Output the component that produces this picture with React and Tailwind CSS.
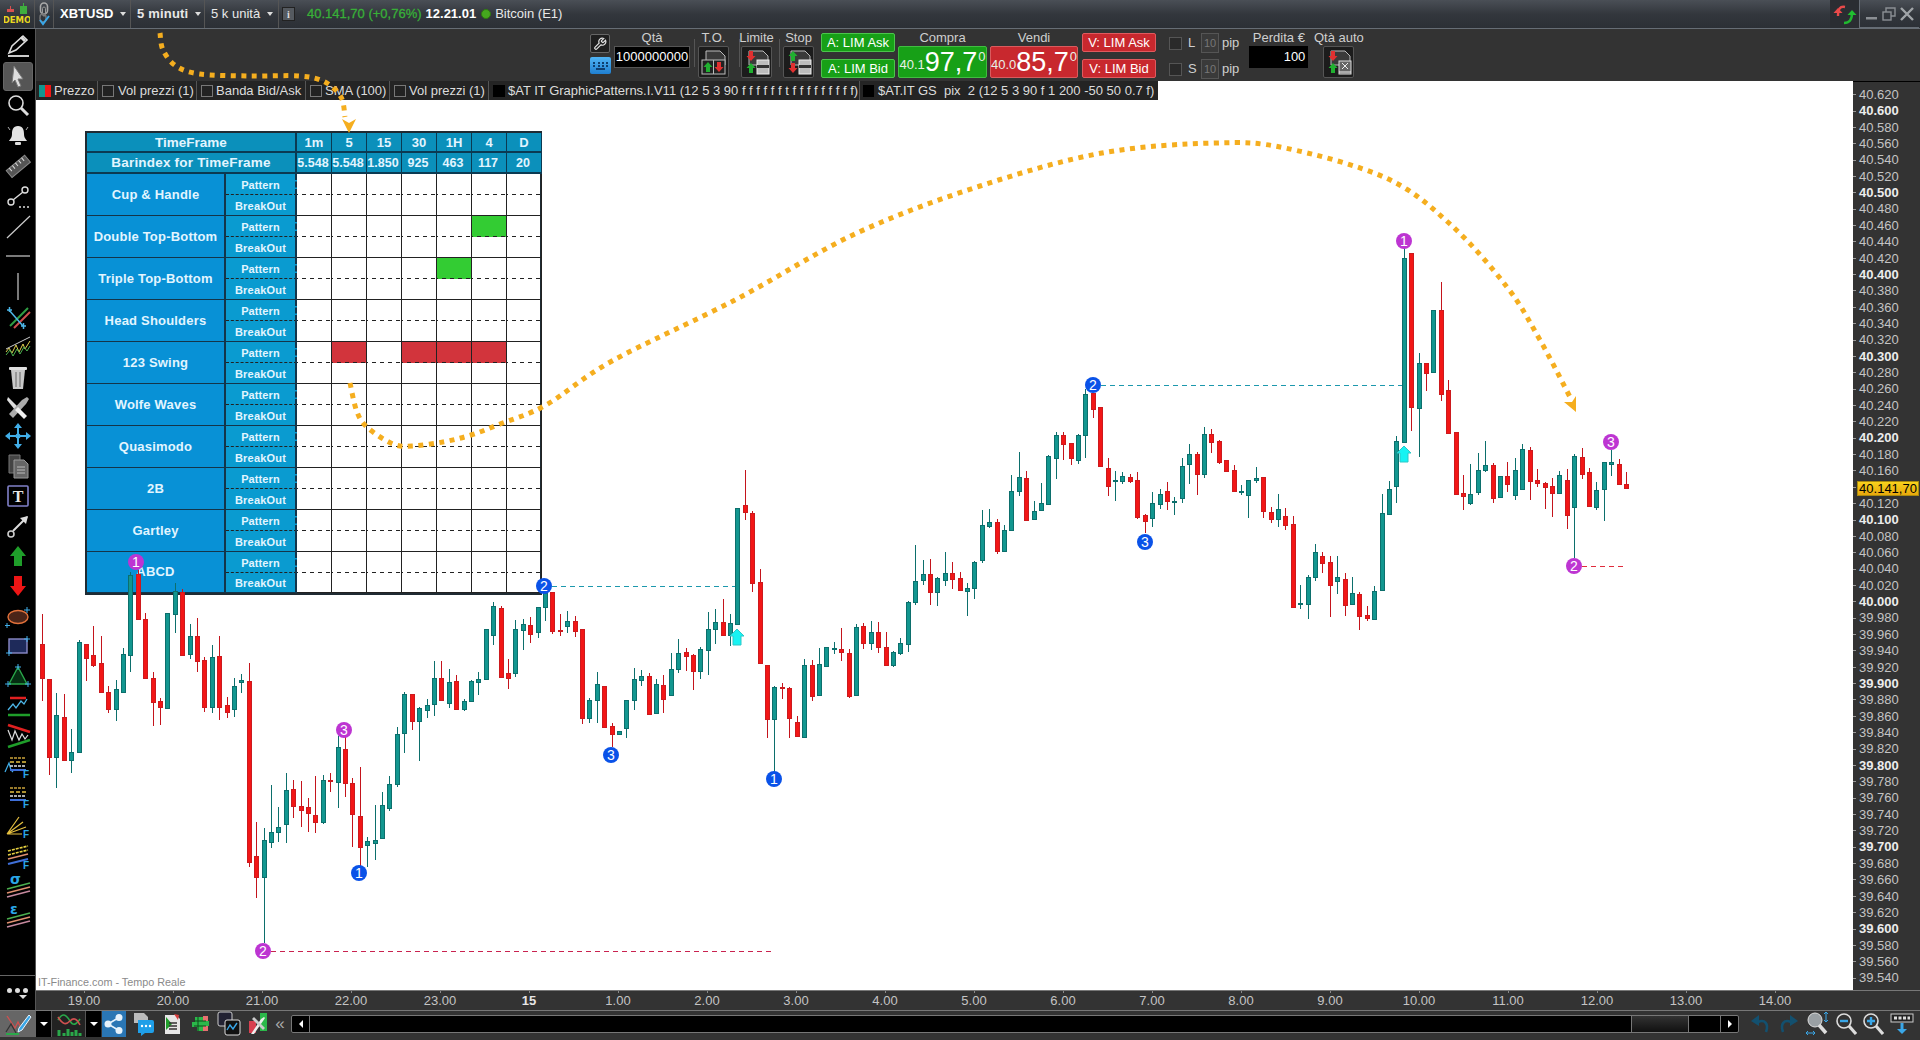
import React from "react";

const C = `614 644 678 701 1
.. 679 757 775 1
693 715 757 788 0
694 717 760 760 1
729 752 760 773 0
640 642 752 752 0
644 644 658 681 1
626 655 665 667 1
636 663 692 693 1
686 692 709 713 1
680 689 709 721 0
648 654 692 692 0
572 575 655 672 0
570 574 619 619 1
613 619 678 678 1
672 678 702 726 1
698 701 707 725 1
613 613 708 708 0
583 591 614 633 0
589 592 655 655 1
624 636 654 659 0
618 636 661 672 1
657 660 707 712 1
645 657 707 713 0
636 656 707 720 1
697 705 712 718 1
678 686 709 717 0
674 680 682 693 0
663 681 862 867 1
822 856 877 898 1
828 840 877 943 0
785 832 842 848 0
807 827 832 842 0
773 790 824 843 0
780 789 806 818 1
781 806 810 827 1
798 807 813 832 1
776 815 822 833 1
775 780 822 824 0
773 780 781 792 1
736 747 782 808 0
737 749 783 797 1
778 783 814 847 1
767 816 847 867 1
837 841 845 867 0
805 840 843 860 0
792 805 838 838 0
776 784 808 811 0
727 734 784 787 0
692 694 733 753 0
694 694 721 730 1
707 708 721 761 0
699 705 710 718 0
661 678 704 716 0
661 678 700 700 1
669 682 703 708 0
675 681 709 709 1
699 701 709 711 0
680 681 701 701 0
672 679 682 695 0
629 629 679 679 0
602 606 635 645 0
606 608 677 677 1
659 673 678 689 1
620 629 673 677 0
619 624 630 650 0
617 625 634 643 1
607 607 632 638 0
587 593 607 621 0
592 592 631 634 1
614 630 631 636 1
611 621 626 633 0
616 621 631 637 1
629 629 718 724 1
698 700 718 723 0
672 684 700 723 0
686 686 727 728 1
723 726 734 747 1
731 731 734 734 0
700 700 728 738 0
668 679 700 710 0
670 676 680 686 0
673 676 714 714 1
679 684 713 713 0
675 685 699 713 1
653 669 695 695 0
639 653 669 673 0
648 652 656 671 1
654 655 671 690 1
647 649 671 679 0
612 629 650 675 0
609 622 629 644 0
599 622 635 636 1
614 623 635 646 0
508 508 624 624 0
470 505 512 520 1
511 513 583 592 1
569 582 663 663 1
665 665 719 738 1
686 687 719 773 0
683 687 688 699 1
687 688 718 738 1
716 722 736 737 1
659 665 737 737 0
660 665 696 701 1
648 664 695 695 0
647 647 666 667 0
642 648 649 654 0
628 649 652 661 1
649 653 696 698 1
624 627 695 695 0
623 626 643 649 1
621 632 643 650 0
622 632 647 653 1
632 647 665 665 1
651 652 665 667 0
638 643 653 655 0
601 602 644 652 0
545 581 602 605 0
560 574 580 585 0
559 574 592 605 1
577 578 592 606 0
552 573 580 586 0
562 573 579 589 1
572 578 590 591 1
583 588 591 616 0
561 562 588 599 0
510 525 560 563 0
509 522 526 528 0
519 522 551 554 1
525 530 551 552 0
475 491 530 531 0
452 477 491 496 0
471 478 520 521 1
501 511 519 520 0
483 503 510 510 0
455 456 504 504 0
432 435 458 479 0
432 435 444 460 1
443 443 458 465 1
434 435 460 464 0
389 394 435 458 0
393 393 409 418 1
407 407 466 467 1
458 468 486 496 1
471 480 481 501 0
472 476 481 484 0
474 477 481 483 1
472 480 517 519 1
514 515 521 533 1
492 503 518 527 0
489 494 504 509 0
482 491 501 510 1
497 501 502 515 0
458 466 498 503 0
444 454 464 484 0
452 454 474 495 1
427 434 474 478 0
429 434 442 453 1
440 441 462 464 1
460 460 471 471 1
465 470 491 492 1
485 491 492 495 0
480 480 495 518 0
467 478 480 483 0
477 477 511 518 1
507 512 519 523 1
494 509 519 527 0
508 516 525 530 1
516 524 607 607 1
585 603 604 609 0
575 577 604 619 0
544 552 577 581 0
552 556 563 573 1
556 562 585 617 1
556 577 581 594 0
573 579 605 616 1
577 593 604 605 0
592 594 616 630 1
606 615 618 621 1
586 591 619 619 0
494 513 590 590 0
481 489 514 514 0
436 441 486 503 0
248 258 442 442 0
253 253 407 431 1
353 363 408 457 0
363 363 373 391 1
310 310 372 373 0
282 310 394 401 1
380 390 433 434 1
432 432 494 494 1
475 493 496 510 1
464 494 503 505 0
453 470 492 495 0
441 465 470 472 0
463 465 498 503 1
476 476 497 497 0
462 476 484 492 1
458 470 495 500 0
444 449 489 489 0
447 450 481 500 1
469 480 483 487 1
482 483 487 509 1
478 486 493 517 1
471 475 493 493 0
469 480 515 529 1
454 456 507 558 0
448 457 474 479 1
468 472 506 506 1
482 490 507 510 0
462 462 489 521 0
450 462 464 476 0
459 464 484 484 1
472 484 488 488 1`.split("\n").map((l, i) => {
  const p = l.trim().split(" ");
  return { x: Math.round(41.5 + 7.404 * i), hi: p[0] === ".." ? +p[1] : +p[0], top: +p[1], bot: +p[2], lo: +p[3], red: p[4] === "1" };
});

const spline = (pts) => {
  let d = `M${pts[0][0]} ${pts[0][1]}`;
  for (let i = 0; i < pts.length - 1; i++) {
    const a = pts[Math.max(i - 1, 0)], b = pts[i], c = pts[i + 1], e = pts[Math.min(i + 2, pts.length - 1)];
    d += ` C${b[0] + (c[0] - a[0]) / 6} ${b[1] + (c[1] - a[1]) / 6} ${c[0] - (e[0] - b[0]) / 6} ${c[1] - (e[1] - b[1]) / 6} ${c[0]} ${c[1]}`;
  }
  return d;
};

const curve1 = spline([[160, 33], [163, 50], [176, 66], [200, 74], [250, 76], [300, 76], [325, 82], [341, 97], [345, 117]]);
const curve2 = spline([[350, 383], [357, 412], [368, 428], [393, 444], [412, 446], [443, 442], [471, 435], [500, 424], [546, 405], [612, 361], [735, 300], [857, 233], [980, 186], [1102, 153], [1215, 143], [1285, 148], [1386, 178], [1450, 224], [1507, 287], [1540, 340], [1570, 397]]);

const markers = [
  [136, 562, "1", 0], [544, 586, "2", 1], [344, 730, "3", 0], [359, 873, "1", 1], [263, 951, "2", 0], [611, 755, "3", 1],
  [774, 779, "1", 1], [1093, 385, "2", 1], [1145, 542, "3", 1], [1404, 241, "1", 0], [1574, 566, "2", 0], [1611, 442, "3", 0],
];

const Chart = () => (
  <svg className="absolute inset-0 pointer-events-none" width="1817" height="909" viewBox="36 81 1817 909">
    <line x1="552" y1="586.5" x2="735" y2="586.5" stroke="#1c98ad" strokeDasharray="5 4" />
    <line x1="1101" y1="385.5" x2="1402" y2="385.5" stroke="#1c98ad" strokeDasharray="5 4" />
    <line x1="271" y1="951.5" x2="772" y2="951.5" stroke="#c9224f" strokeDasharray="5 4" />
    <line x1="1582" y1="566.5" x2="1627" y2="566.5" stroke="#e02b3c" strokeDasharray="5 4" />
    {C.map((c, i) => (
      <g key={i}>
        <line x1={c.x + 0.5} x2={c.x + 0.5} y1={c.hi} y2={c.lo} stroke={c.red ? "#c4141c" : "#0c6f6c"} />
        <rect x={c.x - 1.5} y={c.top + 0.5} width="4" height={Math.max(c.bot - c.top, 1)} fill={c.red ? "#f21616" : "#12968f"} stroke={c.red ? "#cc1a1e" : "#0c6f6c"} />
      </g>
    ))}
    {[[737, 629], [1404, 446]].map(([x, y], i) => (
      <polygon key={i} points={`${x},${y} ${x + 7},${y + 7} ${x + 4},${y + 7} ${x + 4},${y + 16} ${x - 4},${y + 16} ${x - 4},${y + 7} ${x - 7},${y + 7}`} fill="#17f3f3" stroke="#2cc8c8" />
    ))}
    {markers.map(([x, y, n, b], i) => (
      <g key={i}>
        <circle cx={x} cy={y} r="8" fill={b ? "#0a52e8" : "#bd35d2"} />
        <text x={x} y={y + 5} textAnchor="middle" fontSize="14" fill="#fff" fontFamily="Liberation Sans, sans-serif">{n}</text>
      </g>
    ))}
  </svg>
);

const Curves = () => (
  <svg className="absolute inset-0 pointer-events-none" width="1920" height="1040" viewBox="0 0 1920 1040">
    <path d={curve1} fill="none" stroke="#f5ae1f" strokeWidth="5" strokeDasharray="5 5.5" />
    <polygon points="342,119 349,123 356,119 349,133" fill="#f5ae1f" />
    <path d={curve2} fill="none" stroke="#f5ae1f" strokeWidth="5" strokeDasharray="5 5.5" />
    <polygon points="1564,402 1572,402 1576,396 1576,412" fill="#f5ae1f" />
  </svg>
);

const TF = ["1m", "5", "15", "30", "1H", "4", "D"];
const BI = ["5.548", "5.548", "1.850", "925", "463", "117", "20"];
const NAMES = ["Cup & Handle", "Double Top-Bottom", "Triple Top-Bottom", "Head Shoulders", "123 Swing", "Wolfe Waves", "Quasimodo", "2B", "Gartley", "ABCD"];
const MARKS = { "1-5": "bg-[#33cc33]", "2-4": "bg-[#33cc33]", "4-1": "bg-[#d2343c]", "4-3": "bg-[#d2343c]", "4-4": "bg-[#d2343c]", "4-5": "bg-[#d2343c]" };
const DASH = "bg-[linear-gradient(90deg,#222_55%,transparent_55%)] bg-[length:8px_1px] bg-bottom bg-repeat-x";

const Table = () => (
  <div className="absolute left-[49px] top-[50px] w-[457px] border-2 border-[#1f2b33] bg-white grid grid-cols-[139px_71px_repeat(7,35px)] grid-rows-[20px_21px_repeat(19,21px)_20px] font-bold text-[#e2f5ff]">
    <div className="col-span-2 bg-[#0b90bb] border-b-2 border-r-2 border-[#0b3a52] pt-[2px] flex items-center justify-center text-[13.5px]">TimeFrame</div>
    {TF.map((t) => <div key={t} className="bg-[#0b90bb] border-b-2 border-r border-[#0b3a52] pt-[2px] flex items-center justify-center text-[13px]">{t}</div>)}
    <div className="col-span-2 bg-[#0b90bb] border-b-2 border-r-2 border-[#0b3a52] pt-[2px] flex items-center justify-center text-[13.5px] tracking-[0.2px]">Barindex for TimeFrame</div>
    {BI.map((t, i) => <div key={i} className="bg-[#0b90bb] border-b-2 border-r border-[#0b3a52] pt-[2px] flex items-center justify-center text-[12.5px] pr-[2px]">{t}</div>)}
    {NAMES.map((n, r) => (
      <React.Fragment key={n}>
        <div className="row-span-2 bg-[#0891d6] border-b border-r-2 border-[#14354a] flex items-center justify-center text-[13px] tracking-[0.2px]">{n}</div>
        <div className="bg-[#0a9bd0] border-b border-dashed border-r-2 border-r-[#14354a] border-b-[#222] pt-[2px] flex items-center justify-center text-[11px] tracking-[0.1px]">Pattern</div>
        {TF.map((_, c) => <div key={c} className={`${DASH} border-r border-r-[#222] ${MARKS[`${r}-${c}`] || ""}`} />)}
        <div className="bg-[#0a9bd0] border-b border-r-2 border-[#14354a] pt-[2px] flex items-center justify-center text-[11px] tracking-[0.2px]">BreakOut</div>
        {TF.map((_, c) => <div key={c} className="border-b border-r border-[#222]" />)}
      </React.Fragment>
    ))}
  </div>
);

const CB = ({ className = "" }) => <span className={`w-[12px] h-[12px] border border-[#777] bg-[#222] ${className}`} />;

const Legend = () => (
  <div className="absolute left-0 top-0 h-[19px] w-[1122px] bg-[#242424] flex items-center text-[13px] text-[#dcdcdc] whitespace-pre">
    <div className="h-full w-[62px] flex items-center border-r border-[#555] shrink-0">
      <span className="ml-[3px] w-[6px] h-[12px] bg-[#12968f]" /><span className="w-[6px] h-[12px] bg-[#f01818]" />
      <span className="ml-[3px]">Prezzo</span>
    </div>
    <div className="h-full w-[99px] flex items-center border-r border-[#555] shrink-0"><CB className="ml-[4px] mr-[4px]" />Vol prezzi (1)</div>
    <div className="h-full w-[109px] flex items-center border-r border-[#555] shrink-0"><CB className="ml-[4px] mr-[3px]" />Banda Bid/Ask</div>
    <div className="h-full w-[84px] flex items-center border-r border-[#555] shrink-0"><CB className="ml-[4px] mr-[3px]" />SMA (100)</div>
    <div className="h-full w-[99px] flex items-center border-r border-[#555] shrink-0"><CB className="ml-[4px] mr-[3px]" />Vol prezzi (1)</div>
    <div className="h-full w-[371px] flex items-center border-r border-[#555] shrink-0"><span className="ml-[4px] mr-[3px] w-[12px] h-[12px] bg-black" />$AT IT GraphicPatterns.I.V11 (12 5 3 90 f f f f f f t f f f f f f f f f)</div>
    <div className="h-full flex items-center shrink-0"><span className="ml-[3px] mr-[4px] w-[11px] h-[12px] bg-black" />$AT.IT GS  pix  2 (12 5 3 90 f 1 200 -50 50 0.7 f)</div>
  </div>
);

const Caret = () => <span className="inline-block ml-[7px] w-0 h-0 border-l-[3px] border-r-[3px] border-t-[4px] border-l-transparent border-r-transparent border-t-[#ddd]" />;

const TopBar = () => (
  <div className="h-[29px] shrink-0 flex items-stretch bg-gradient-to-b from-[#4a4f56] via-[#33373d] to-[#2c3036] border-b border-[#666d75] text-[13px] text-[#e8e8e8] whitespace-nowrap">
    <div className="w-[35px] flex items-center justify-center border-r border-[#555]">
      <svg width="26" height="24" viewBox="0 0 26 24">
        <rect x="3" y="7" width="7" height="3" fill="#d85050" /><rect x="6" y="4" width="1" height="3" fill="#d85050" />
        <rect x="16" y="4" width="7" height="8" fill="#3fae3f" /><rect x="19" y="1" width="1" height="3" fill="#3fae3f" />
        <text x="13" y="21" textAnchor="middle" fontSize="8.5" fontWeight="700" fill="#e8d820" fontFamily="DejaVu Sans, sans-serif">DEMO</text>
      </svg>
    </div>
    <div className="w-[19px] flex items-center justify-center border-r border-[#555]">
      <svg width="14" height="24" viewBox="0 0 14 24">
        <rect x="3.5" y="1" width="7" height="11" rx="3.5" fill="none" stroke="#aaa" strokeWidth="1.6" />
        <rect x="5.5" y="5" width="3" height="9" rx="1.5" fill="none" stroke="#999" />
        <rect x="3" y="12" width="6" height="8" rx="3" fill="none" stroke="#777" strokeWidth="1.4" />
        <path d="M3 18l3 4 6-8" fill="none" stroke="#3aa7e8" strokeWidth="2" />
      </svg>
    </div>
    <div className="w-[77px] flex items-center pl-[6px] border-r border-[#555]"><b className="text-white">XBTUSD</b><Caret /></div>
    <div className="w-[74px] flex items-center pl-[6px] border-r border-[#555]"><b className="tracking-[0.2px]">5 minuti</b><Caret /></div>
    <div className="w-[74px] flex items-center pl-[6px] border-r border-[#555]">5 k unità<Caret /></div>
    <div className="flex items-center pl-[3px]">
      <span className="w-[13px] h-[14px] bg-[#555a60] border border-[#222] text-[#ddd] text-[10px] font-bold flex items-center justify-center font-['Liberation_Serif',serif]">i</span>
      <b className="ml-[12px] font-normal text-[#38b038] [-webkit-text-stroke:0.3px_#38b038]">40.141,70 (+0,76%)</b>
      <b className="ml-[4px] text-white">12.21.01</b>
      <span className="ml-[5px] w-[10px] h-[10px] rounded-full bg-[#45a81e] border border-[#2f7a10]" />
      <span className="ml-[4px]">Bitcoin (E1)</span>
    </div>
    <div className="ml-auto mr-[1px] flex items-stretch">
      <div className="w-[29px] flex items-center justify-center bg-[#2a2d32]">
        <svg width="24" height="22" viewBox="0 0 24 22">
          <path d="M12 4C7 3 5 6 5 13" fill="none" stroke="#e84a4a" strokeWidth="2.4" />
          <path d="M5 5L0.5 10H9.5Z" fill="#e84a4a" />
          <path d="M11 20c5 0 8-3 8-10" fill="none" stroke="#20b830" strokeWidth="2.4" />
          <path d="M19 7l-4.5 5h9z" fill="#20c030" />
        </svg>
      </div>
      <div className="w-[60px] border-l border-b border-[#666d75] flex items-center justify-around px-[3px]">
        <svg width="14" height="14" viewBox="0 0 14 14"><rect x="1" y="10" width="11" height="2.5" fill="#8b8f94" /></svg>
        <svg width="14" height="14" viewBox="0 0 14 14" fill="none" stroke="#8b8f94" strokeWidth="1.4"><rect x="1" y="5" width="8" height="8" /><path d="M4 5V1h9v8h-4" /></svg>
        <svg width="16" height="16" viewBox="0 0 16 16" stroke="#a0a4a8" strokeWidth="2.4"><path d="M2 2l12 12M14 2L2 14" /></svg>
      </div>
    </div>
  </div>
);

const ArrowUp = ({ x, y, c }) => <path d={`M${x} ${y}l4.5 5h-2.5v5h-4v-5h-2.5z`} fill={c} />;
const ArrowDn = ({ x, y, c }) => <path d={`M${x} ${y + 10}l4.5 -5h-2.5v-5h-4v5h-2.5z`} fill={c} />;
const Doc = () => <path d="M6 3h14l5 5v9H6z" fill="#3a3a3a" stroke="#bbb" />;

const OrderBtn = ({ kind }) => (
  <div className="w-[31px] h-[32px] bg-[#1c1c1c] border border-[#555] rounded-[2px] flex items-center justify-center">
    <svg width="27" height="28" viewBox="0 0 27 28">
      <Doc />
      {kind === "to" && <><rect x="2" y="12" width="23" height="14" fill="#222" stroke="#bbb" /><line x1="13.5" y1="12" x2="13.5" y2="26" stroke="#bbb" /><ArrowUp x={8} y={14} c="#20b030" /><ArrowDn x={19} y={14} c="#e03030" /></>}
      {kind === "lim" && <><ArrowDn x={8} y={3} c="#e03030" /><ArrowUp x={8} y={15} c="#20b030" /><rect x="14" y="12" width="12" height="14" fill="#bdbdbd" stroke="#eee" /><rect x="14" y="17" width="12" height="3" fill="#333" /></>}
      {kind === "stop" && <><ArrowUp x={8} y={3} c="#20b030" /><ArrowDn x={8} y={15} c="#e03030" /><rect x="14" y="12" width="12" height="14" fill="#bdbdbd" stroke="#eee" /><rect x="14" y="17" width="12" height="3" fill="#333" /></>}
      {kind === "auto" && <><ArrowDn x={8} y={3} c="#e03030" /><ArrowUp x={8} y={15} c="#20b030" /><rect x="14" y="13" width="12" height="13" fill="#666" stroke="#ddd" /><path d="M17 15l6 6M23 15l-6 6" stroke="#eee" /><line x1="14" y1="24" x2="26" y2="24" stroke="#eee" /></>}
    </svg>
  </div>
);

const Label = ({ children, className = "" }) => (
  <div className={`h-[17px] flex items-center justify-center text-[13px] text-[#cfcfcf] whitespace-nowrap ${className}`}>{children}</div>
);

const Sep = ({ ml }) => <div className={`w-px h-[28px] mt-[10px] bg-[#555] ${ml}`} />;

const Col = ({ label, kind, className = "" }) => (
  <div className={`w-[31px] flex flex-col items-center ${className}`}><Label>{label}</Label><OrderBtn kind={kind} /></div>
);

const LimBtn = ({ children, red }) => (
  <div className={`h-[19px] w-[74px] rounded-[2px] flex items-center justify-center text-[13px] text-white whitespace-nowrap border ${red ? "bg-[#c8282e] border-[#e05a5e]" : "bg-[#17a017] border-[#4cc44c]"}`}>{children}</div>
);

const Price = ({ label, a, b, red, className = "" }) => (
  <div className={`flex flex-col ${className}`}>
    <Label>{label}</Label>
    <div className={`h-[32px] rounded-[2px] flex items-center justify-center text-white border ${red ? "bg-[#c8282e] border-[#d95b5e]" : "bg-[#17a017] border-[#41bd41]"}`}>
      <span className="text-[13px] mt-[5px] text-[#e8f0e8]">{a}</span>
      <span className="text-[27px] leading-none">{b}</span>
      <span className="text-[13px] -mt-[10px] ml-[1px] text-[#e8f0e8]">0</span>
    </div>
  </div>
);

const Toolbar2 = () => (
  <div className="h-[52px] shrink-0 bg-[#333333] flex items-start text-[#cfcfcf]">
    <div className="ml-[554px] w-[21px] flex flex-col gap-[4px] pt-[5px]">
      <div className="w-[20px] h-[19px] bg-[#1f1f1f] border border-[#666] rounded-[2px] flex items-center justify-center">
        <svg width="14" height="14" viewBox="0 0 24 24" fill="none" stroke="#e6e6e6" strokeWidth="2"><path d="M14.7 6.3a1 1 0 0 0 0 1.4l1.6 1.6a1 1 0 0 0 1.4 0l3.77-3.77a6 6 0 0 1-7.94 7.94l-6.91 6.91a2.12 2.12 0 0 1-3-3l6.91-6.91a6 6 0 0 1 7.94-7.94l-3.76 3.76z" /></svg>
      </div>
      <div className="w-[21px] h-[17px] rounded-[2px] bg-gradient-to-b from-[#4fb4f5] to-[#1f7fd0] flex flex-col items-center justify-center gap-[1px]">
        <div className="w-[15px] h-[2px] border-t-2 border-dotted border-[#0e3f70]" />
        <div className="w-[15px] h-[2px] border-t-2 border-dotted border-[#0e3f70]" />
        <div className="w-[9px] h-[2px] bg-[#0e3f70]" />
      </div>
    </div>
    <div className="ml-[3px] w-[76px]">
      <Label>Qtà</Label>
      <div className="h-[22px] bg-black border border-[#555] flex items-center justify-center text-[13px] text-white">1000000000</div>
    </div>
    <Sep ml="ml-[4px]" />
    <Col label="T.O." kind="to" className="ml-[3px]" />
    <Sep ml="ml-[10px]" />
    <Col label="Limite" kind="lim" className="ml-[1px]" />
    <Sep ml="ml-[7px]" />
    <Col label="Stop" kind="stop" className="ml-[3px]" />
    <div className="ml-[7px] w-[74px] pt-[4px] flex flex-col gap-[7px]"><LimBtn>A: LIM Ask</LimBtn><LimBtn>A: LIM Bid</LimBtn></div>
    <Price label="Compra" a="40.1" b="97,7" className="ml-[3px] w-[89px]" />
    <Price label="Vendi" a="40.0" b="85,7" red className="ml-[3px] w-[88px]" />
    <div className="ml-[4px] w-[74px] pt-[4px] flex flex-col gap-[7px]"><LimBtn red>V: LIM Ask</LimBtn><LimBtn red>V: LIM Bid</LimBtn></div>
    <div className="ml-[13px] pt-[4px] flex flex-col gap-[6px] text-[13px]">
      {["L", "S"].map((s) => (
        <div key={s} className="h-[20px] flex items-center">
          <span className="w-[13px] h-[13px] bg-[#2a2a2a] border border-[#555]" />
          <span className="ml-[6px] w-[13px]">{s}</span>
          <span className="w-[18px] h-[20px] bg-[#3a3a3a] border border-[#555] text-[#777] text-[11px] flex items-center justify-center">10</span>
          <span className="ml-[3px]">pip</span>
        </div>
      ))}
    </div>
    <div className="ml-[10px] w-[59px]">
      <Label>Perdita €</Label>
      <div className="h-[22px] bg-black flex items-center justify-end pr-[3px] text-[13px] text-white">100</div>
    </div>
    <div className="ml-[15px] w-[31px] flex flex-col items-center"><Label>Qtà auto</Label><OrderBtn kind="auto" /></div>
  </div>
);

const S = ({ children, active }) => (
  <div className="h-[30px] shrink-0 w-[36px] flex items-center justify-center">
    {active ? <div className="w-[30px] h-[29px] rounded-[3px] bg-[#555] border border-[#666] flex items-center justify-center">{children}</div> : <svg width="28" height="28" viewBox="0 0 28 28" fill="none">{children}</svg>}
  </div>
);

const FibBars = () => (
  <g strokeWidth="1.5">
    <path d="M6 6h16" stroke="#c9a13a" strokeDasharray="3 1" /><path d="M6 10h16" stroke="#e6c040" strokeDasharray="4 2" /><path d="M6 14h16" stroke="#e3e3e3" strokeDasharray="3 1" /><path d="M6 18h16" stroke="#3f6fd8" strokeWidth="2" />
    <text x="19" y="26" fontSize="10" fontWeight="700" fill="#2aa7e8" fontFamily="Liberation Sans, sans-serif">F</text>
  </g>
);

const Lines3 = ({ ch }) => (
  <g>
    <text x="6" y="12" fontSize="14" fontWeight="700" fill="#2aa7e8" fontFamily="DejaVu Sans, sans-serif">{ch}</text>
    <path d="M3 17l23-6" stroke="#4caf50" strokeWidth="1.3" /><path d="M3 21l23-6" stroke="#e09070" strokeWidth="1.3" /><path d="M3 25l23-6" stroke="#c78aa0" strokeWidth="1.3" />
  </g>
);

const LeftBar = () => (
  <div className="w-[36px] shrink-0 bg-black border-r border-[#555] flex flex-col pt-[2px]">
    <S><path d="M5 21L8 14 19 4l4 4L12 18z" stroke="#ddd" strokeWidth="1.6" /><path d="M17 5l4 4" stroke="#ddd" strokeWidth="3" /><path d="M4 24h21" stroke="#ccc" strokeWidth="2" /></S>
    <S active><svg width="22" height="26" viewBox="0 0 22 26"><path d="M7 3l9 13h-5l3 7-3 1-3-7-3 3z" fill="#ddd" stroke="#777" /></svg></S>
    <S><circle cx="12" cy="11" r="7" stroke="#ddd" strokeWidth="1.6" /><path d="M17 16l7 7" stroke="#ddd" strokeWidth="3" /></S>
    <S><path d="M14 4c5 0 6 4 6 8 0 4 2 5 3 7H5c1-2 3-3 3-7 0-4 1-8 6-8z" fill="#e2e2e2" /><rect x="11" y="20" width="6" height="3" rx="1" fill="#ddd" /><path d="M4 5l2 3M24 5l-2 3" stroke="#aaa" /></S>
    <S><g transform="rotate(-40 14 14)"><rect x="2" y="10" width="24" height="9" fill="#555" stroke="#888" /><path d="M6 10v4M10 10v4M14 10v4M18 10v4M22 10v4" stroke="#ddd" /></g></S>
    <S><circle cx="7" cy="20" r="3" stroke="#ddd" strokeWidth="1.4" /><circle cx="21" cy="8" r="3" stroke="#ddd" strokeWidth="1.4" /><path d="M9 18L19 10" stroke="#ddd" strokeWidth="1.4" /><path d="M15 25h10" stroke="#ddd" strokeDasharray="2 2" strokeWidth="1.4" /></S>
    <S><path d="M3 26L26 4" stroke="#ccc" strokeWidth="1.2" /></S>
    <S><path d="M2 14h24" stroke="#ccc" strokeWidth="1.2" /></S>
    <S><path d="M14 1v27" stroke="#ccc" strokeWidth="1.2" /></S>
    <S><path d="M6 24L24 6" stroke="#2f9e44" strokeWidth="2" /><path d="M10 26L26 10" stroke="#d05050" strokeWidth="2" /><path d="M5 8l14 16" stroke="#4db6e8" strokeWidth="1.5" /><path d="M3 8h5M5.5 5v5M17 24h5M19.5 21v6" stroke="#4db6e8" strokeWidth="1.5" /></S>
    <S><path d="M2 20l3-4 3 5 4-8 3 7 4-8 2 5 5-8" stroke="#e0d050" strokeWidth="1" /><path d="M2 23l4-5 3 6 4-7 3 5 4-7 3 4 3-5" stroke="#4caf50" strokeWidth="1" /><path d="M2 17L26 5" stroke="#ccc" strokeWidth="1" /></S>
    <S><path d="M7 8l2 19h10l2-19z" fill="#c9c9c9" /><rect x="5" y="5" width="18" height="3" rx="1" fill="#e0e0e0" /><path d="M12 10v15M16 10v15" stroke="#666" /></S>
    <S><path d="M4 5l10 10-3 3-8-10z" fill="#ddd" /><path d="M5 22L18 8l5-3 2 2-3 5-13 14z" fill="#aaa" /><path d="M14 15l9 9-3 3-9-9z" fill="#eee" /></S>
    <S><path d="M14 3v22M3 14h22" stroke="#41aee8" strokeWidth="2" /><path d="M14 1l-4 5h8zM14 27l-4-5h8zM1 14l5-4v8zM27 14l-5-4v8z" fill="#41aee8" /><circle cx="14" cy="14" r="2.5" fill="#41aee8" /></S>
    <S><path d="M5 3h11v18H5z" fill="#444" stroke="#777" /><path d="M10 8h10l4 4v14H10z" fill="#666" stroke="#999" /><path d="M13 15h8M13 18h8M13 21h8" stroke="#bbb" /></S>
    <S><rect x="4" y="4" width="20" height="20" rx="1" stroke="#8080c8" strokeWidth="1.6" /><text x="14" y="20" textAnchor="middle" fontSize="16" fontWeight="700" fill="#e8e8e8" fontFamily="Liberation Serif, serif">T</text></S>
    <S><path d="M9 19L23 5" stroke="#ddd" strokeWidth="2" /><path d="M24 4l-8 2 6 6z" fill="#ddd" /><circle cx="7" cy="22" r="3" stroke="#ccc" strokeWidth="1.6" /></S>
    <S><path d="M14 4l8 10h-4v10h-8V14H6z" fill="#1f9e2a" /></S>
    <S><path d="M14 24l8-10h-4V4h-8v10H6z" fill="#ee1515" /></S>
    <S><ellipse cx="14" cy="15" rx="10" ry="6.5" fill="#4a2418" stroke="#e0703a" strokeWidth="1.4" /><path d="M23 5v6M20 8h6M3 21v5M1 23.5h5" stroke="#41aee8" /></S>
    <S><rect x="5" y="7" width="18" height="14" fill="#1e2a5a" stroke="#8a8ac8" strokeWidth="1.4" /><path d="M23 4v6M20 7h6M5 18v6M2 21h6" stroke="#41aee8" /></S>
    <S><path d="M14 5L5 22h18z" fill="#052e12" stroke="#2aa84a" strokeWidth="1.4" /><path d="M14 2v6M11 5h6M4 19v6M1 22h6M24 19v6M21 22h6" stroke="#41aee8" /></S>
    <S><path d="M6 6h16" stroke="#e02020" strokeWidth="2.5" /><path d="M4 18l5-6 3 4 5-7 3 3 3-5" stroke="#4db6e8" strokeWidth="1.3" /><path d="M4 23h22" stroke="#1f9e2a" strokeWidth="2.5" /></S>
    <S><path d="M4 3l22 7" stroke="#e02020" strokeWidth="2.5" /><path d="M4 8l4 10 3-9 4 9 3-6 3 5 3-4" stroke="#ddd" strokeWidth="1.2" /><path d="M4 25l22-7" stroke="#1f9e2a" strokeWidth="2.5" /></S>
    <S><path d="M1 20l4-9 2 7 2 2" stroke="#41aee8" strokeWidth="1.2" /><FibBars /></S>
    <S><FibBars /></S>
    <S><path d="M3 22L15 5M3 22L19 10M3 22L22 15M3 22h15" stroke="#e6c040" strokeWidth="1.2" /><text x="19" y="26" fontSize="10" fontWeight="700" fill="#2aa7e8" fontFamily="Liberation Sans, sans-serif">F</text></S>
    <S><path d="M4 9l20-5M4 13l20-5" stroke="#e6d040" strokeWidth="1.6" strokeDasharray="3 1" /><path d="M4 17l20-5" stroke="#e09070" strokeWidth="1.6" /><path d="M4 22l20-5" stroke="#3f6fd8" strokeWidth="2" /><text x="19" y="27" fontSize="10" fontWeight="700" fill="#2aa7e8" fontFamily="Liberation Sans, sans-serif">F</text></S>
    <S><Lines3 ch="σ" /></S>
    <S><Lines3 ch="ε" /></S>
    <div className="mt-auto h-[35px] border-t border-[#666] flex flex-col items-center justify-center gap-[2px]">
      <div className="flex gap-[3px]"><span className="w-[5px] h-[5px] rounded-full bg-[#ddd]" /><span className="w-[5px] h-[5px] rounded-full bg-[#ddd]" /><span className="w-[5px] h-[5px] rounded-full bg-[#ddd]" /></div>
      <span className="ml-[10px] w-0 h-0 border-l-[4px] border-r-[4px] border-t-[4px] border-l-transparent border-r-transparent border-t-[#ddd]" />
    </div>
  </div>
);

const prices = Array.from({ length: 55 }, (_, i) => 40620 - 20 * i);
const fmt = (p) => `${Math.floor(p / 1000)}.${String(p % 1000).padStart(3, "0")}`;

const YAxis = () => (
  <div className="relative w-[67px] shrink-0 bg-[#333333] border-t border-black pt-[4.5px]">
    {prices.map((p) => (
      <div key={p} className="h-[16.37px] flex items-center">
        <span className="w-[3px] h-px bg-[#999] mr-[3px]" />
        {p !== 40140 && <span className={`text-[13px] ${p % 100 === 0 ? "font-bold text-[#ececec]" : "text-[#c4c4c4]"}`}>{fmt(p)}</span>}
      </div>
    ))}
    <div className="absolute left-[4px] top-[399px] w-[62px] h-[15px] bg-gradient-to-b from-[#f8d21c] to-[#e8a80c] border border-[#a88a10] flex items-center justify-center text-[13px] text-black">40.141,70</div>
  </div>
);

const HOURS = ["19.00", "20.00", "21.00", "22.00", "23.00", "15", "1.00", "2.00", "3.00", "4.00", "5.00", "6.00", "7.00", "8.00", "9.00", "10.00", "11.00", "12.00", "13.00", "14.00"];

const TimeAxis = () => (
  <div className="h-[20px] shrink-0 bg-[#333333] border-t border-[#777] flex pl-[3.5px]">
    {HOURS.map((h) => (
      <div key={h} className="w-[89px] shrink-0 flex flex-col items-center">
        <span className="w-px h-[2px] bg-[#888]" />
        <span className={`text-[13px] leading-[15px] ${h === "15" ? "font-bold text-[#e6e6e6]" : "text-[#c4c4c4]"}`}>{h}</span>
      </div>
    ))}
  </div>
);

const BottomCaret = () => <span className="w-0 h-0 border-l-[4px] border-r-[4px] border-t-[4px] border-l-transparent border-r-transparent border-t-white" />;

const BottomBar = () => (
  <div className="h-[30px] shrink-0 bg-[#333333] border-t border-[#777] flex items-stretch pb-[3px]">
    <div className="w-[36px] bg-[#666] flex items-center justify-center">
      <svg width="28" height="24" viewBox="0 0 28 24" fill="none"><path d="M3 4l8 12 3-6 4 8" stroke="#d05050" strokeWidth="1.3" /><path d="M2 20l5-8 5 9" stroke="#333" strokeWidth="1.3" /><path d="M15 16L25 3l2 2-9 13-4 2z" fill="#3aa7e8" stroke="#eaf6ff" /><path d="M2 22h13" stroke="#2aa84a" strokeWidth="2" /></svg>
    </div>
    <div className="w-[15px] bg-black flex items-center justify-center"><BottomCaret /></div>
    <div className="w-[34px] bg-[#222] border-l border-[#555] flex items-center justify-center">
      <svg width="26" height="26" viewBox="0 0 26 26" fill="none"><path d="M2 9c5-9 9-4 12 1s6 4 10-2" stroke="#2aa84a" strokeWidth="1.6" /><path d="M2 6c5 8 8 8 12 4s7-2 10 4" stroke="#d05050" strokeWidth="1.6" /><path d="M3 25v-6M8 25v-3M12 25v-7M16 25v-4M20 25v-6M24 25v-3" stroke="#2aa84a" strokeWidth="3" /></svg>
    </div>
    <div className="w-[16px] bg-black border-l border-[#555] flex items-center justify-center"><BottomCaret /></div>
    <div className="ml-[1px] w-[24px] bg-[#2a76b4] flex items-center justify-center">
      <svg width="20" height="22" viewBox="0 0 20 22" fill="#e6f2fb"><circle cx="15" cy="4.5" r="3.5" /><circle cx="4" cy="11" r="3.5" /><circle cx="15" cy="17.5" r="3.5" /><path d="M4 11L15 4.5M4 11l11 6.5" stroke="#e6f2fb" strokeWidth="1.5" /></svg>
    </div>
    <div className="ml-[5px] w-[23px] flex items-center justify-center">
      <svg width="22" height="24" viewBox="0 0 22 24"><path d="M2 1h10l4 4v6H2z" fill="#bbb" /><path d="M6 8h14a2 2 0 0 1 2 2v9a2 2 0 0 1-2 2h-7l-4 3v-3H6z" fill="#1f9fe8" /><circle cx="10" cy="14" r="1.2" fill="#fff" /><circle cx="14" cy="14" r="1.2" fill="#fff" /><circle cx="18" cy="14" r="1.2" fill="#fff" /></svg>
    </div>
    <div className="ml-[8px] w-[20px] flex items-center justify-center">
      <svg width="18" height="24" viewBox="0 0 18 24"><path d="M2 3h11l4 4v15H2z" fill="#e6e6e6" /><path d="M3 5l6 7-6 6z" fill="#1f9e2a" /><path d="M11 2l5 1-1 5z" fill="#d84040" /><path d="M6 11h8M6 14h8M6 17h8" stroke="#333" strokeWidth="1.4" /></svg>
    </div>
    <div className="ml-[7px] w-[22px] flex items-center justify-center">
      <svg width="20" height="24" viewBox="0 0 20 24"><path d="M5 5h9v4h5v5h-4v5h-8v-4H2v-5h3z" fill="#2bb84a" /><path d="M13 4h5v5h-5zM13 14h5v5h-5z" fill="#e87070" /><path d="M4 9h12M4 14h12M8 5v14" stroke="#0e4a1a" /></svg>
    </div>
    <div className="ml-[6px] w-[24px] flex items-center justify-center">
      <svg width="24" height="26" viewBox="0 0 24 26" fill="none"><rect x="1" y="1" width="14" height="14" rx="2" fill="#223" stroke="#ccc" /><rect x="8" y="9" width="15" height="15" rx="2" fill="#111" stroke="#ddd" /><path d="M10 19l3-5 3 4 4-6" stroke="#3aa7e8" strokeWidth="1.4" /></svg>
    </div>
    <div className="ml-[6px] w-[22px] flex items-center justify-center">
      <svg width="22" height="26" viewBox="0 0 22 26"><rect x="13" y="2" width="7" height="18" fill="#2bb84a" /><rect x="2" y="10" width="7" height="12" fill="#d84050" /><path d="M4 23L14 8l3-2 1 1-2 3-9 13z" fill="#eee" /><path d="M5 8l11 11 2-2L7 6z" fill="#ccc" /></svg>
    </div>
    <div className="ml-[6px] w-[10px] flex items-center justify-center text-[17px] text-[#aaa]">«</div>
    <div className="ml-[6px] w-[1448px] my-[4px] bg-black border border-[#777] rounded-[2px] flex items-stretch">
      <div className="w-[18px] border-r border-[#777] flex items-center justify-center"><span className="w-0 h-0 border-t-[4px] border-b-[4px] border-r-[4px] border-t-transparent border-b-transparent border-r-white" /></div>
      <div className="ml-[1321px] w-[58px] border-x border-[#777] bg-gradient-to-b from-[#333] to-[#111]" />
      <div className="ml-auto w-[18px] border-l border-[#777] flex items-center justify-center"><span className="w-0 h-0 border-t-[4px] border-b-[4px] border-l-[4px] border-t-transparent border-b-transparent border-l-white" /></div>
    </div>
    <div className="flex-1 flex items-center justify-around pl-[8px] pr-[3px]">
      <svg width="22" height="22" viewBox="0 0 22 22" fill="none"><path d="M8 9c7-3 11 2 8 10" stroke="#13506f" strokeWidth="2.6" /><path d="M1 8l8-6v11z" fill="#13506f" /></svg>
      <svg width="22" height="22" viewBox="0 0 22 22" fill="none"><path d="M14 9C7 6 3 11 6 19" stroke="#13506f" strokeWidth="2.6" /><path d="M21 8l-8-6v11z" fill="#13506f" /></svg>
      <svg width="24" height="26" viewBox="0 0 24 26" fill="none"><circle cx="10" cy="9" r="7" fill="#9aa0a4" stroke="#ddd" /><path d="M14 14l7 8" stroke="#ddd" strokeWidth="3.5" /><path d="M21 1v10M19 3l2-2 2 2M19 9l2 2 2-2M1 22h9M3 20l-2 2 2 2M8 20l2 2-2 2" stroke="#3aa7e8" /></svg>
      <svg width="22" height="24" viewBox="0 0 22 24" fill="none"><circle cx="9" cy="9" r="7" stroke="#ddd" strokeWidth="1.6" /><path d="M5 9h8" stroke="#3aa7e8" strokeWidth="2.4" /><path d="M14 14l7 8" stroke="#ddd" strokeWidth="3.2" /></svg>
      <svg width="22" height="24" viewBox="0 0 22 24" fill="none"><circle cx="9" cy="9" r="7" stroke="#ddd" strokeWidth="1.6" /><path d="M5 9h8M9 5v8" stroke="#3aa7e8" strokeWidth="2.4" /><path d="M14 14l7 8" stroke="#ddd" strokeWidth="3.2" /></svg>
      <svg width="24" height="24" viewBox="0 0 24 24" fill="none"><rect x="1" y="2" width="22" height="8" fill="#222" stroke="#ccc" /><path d="M4 6h16" stroke="#ddd" strokeWidth="3" strokeDasharray="3 1.5" /><path d="M12 11v8" stroke="#3aa7e8" strokeWidth="3" /><path d="M7 17l5 5 5-5z" fill="#3aa7e8" /></svg>
    </div>
  </div>
);

export default function App() {
  return (
    <div className="relative w-[1920px] h-[1040px] flex flex-col overflow-hidden bg-[#333333] font-['Liberation_Sans',Arial,sans-serif]">
      <TopBar />
      <div className="flex-1 min-h-0 flex">
        <LeftBar />
        <div className="flex-1 min-w-0 flex flex-col">
          <Toolbar2 />
          <div className="flex-1 min-h-0 flex">
            <div className="relative flex-1 bg-white overflow-hidden">
              <Table />
              <Chart />
              <Legend />
              <div className="absolute left-[2px] bottom-0 text-[10.8px] text-[#8a8a8a]">IT-Finance.com - Tempo Reale</div>
            </div>
            <YAxis />
          </div>
          <TimeAxis />
        </div>
      </div>
      <BottomBar />
      <Curves />
    </div>
  );
}
